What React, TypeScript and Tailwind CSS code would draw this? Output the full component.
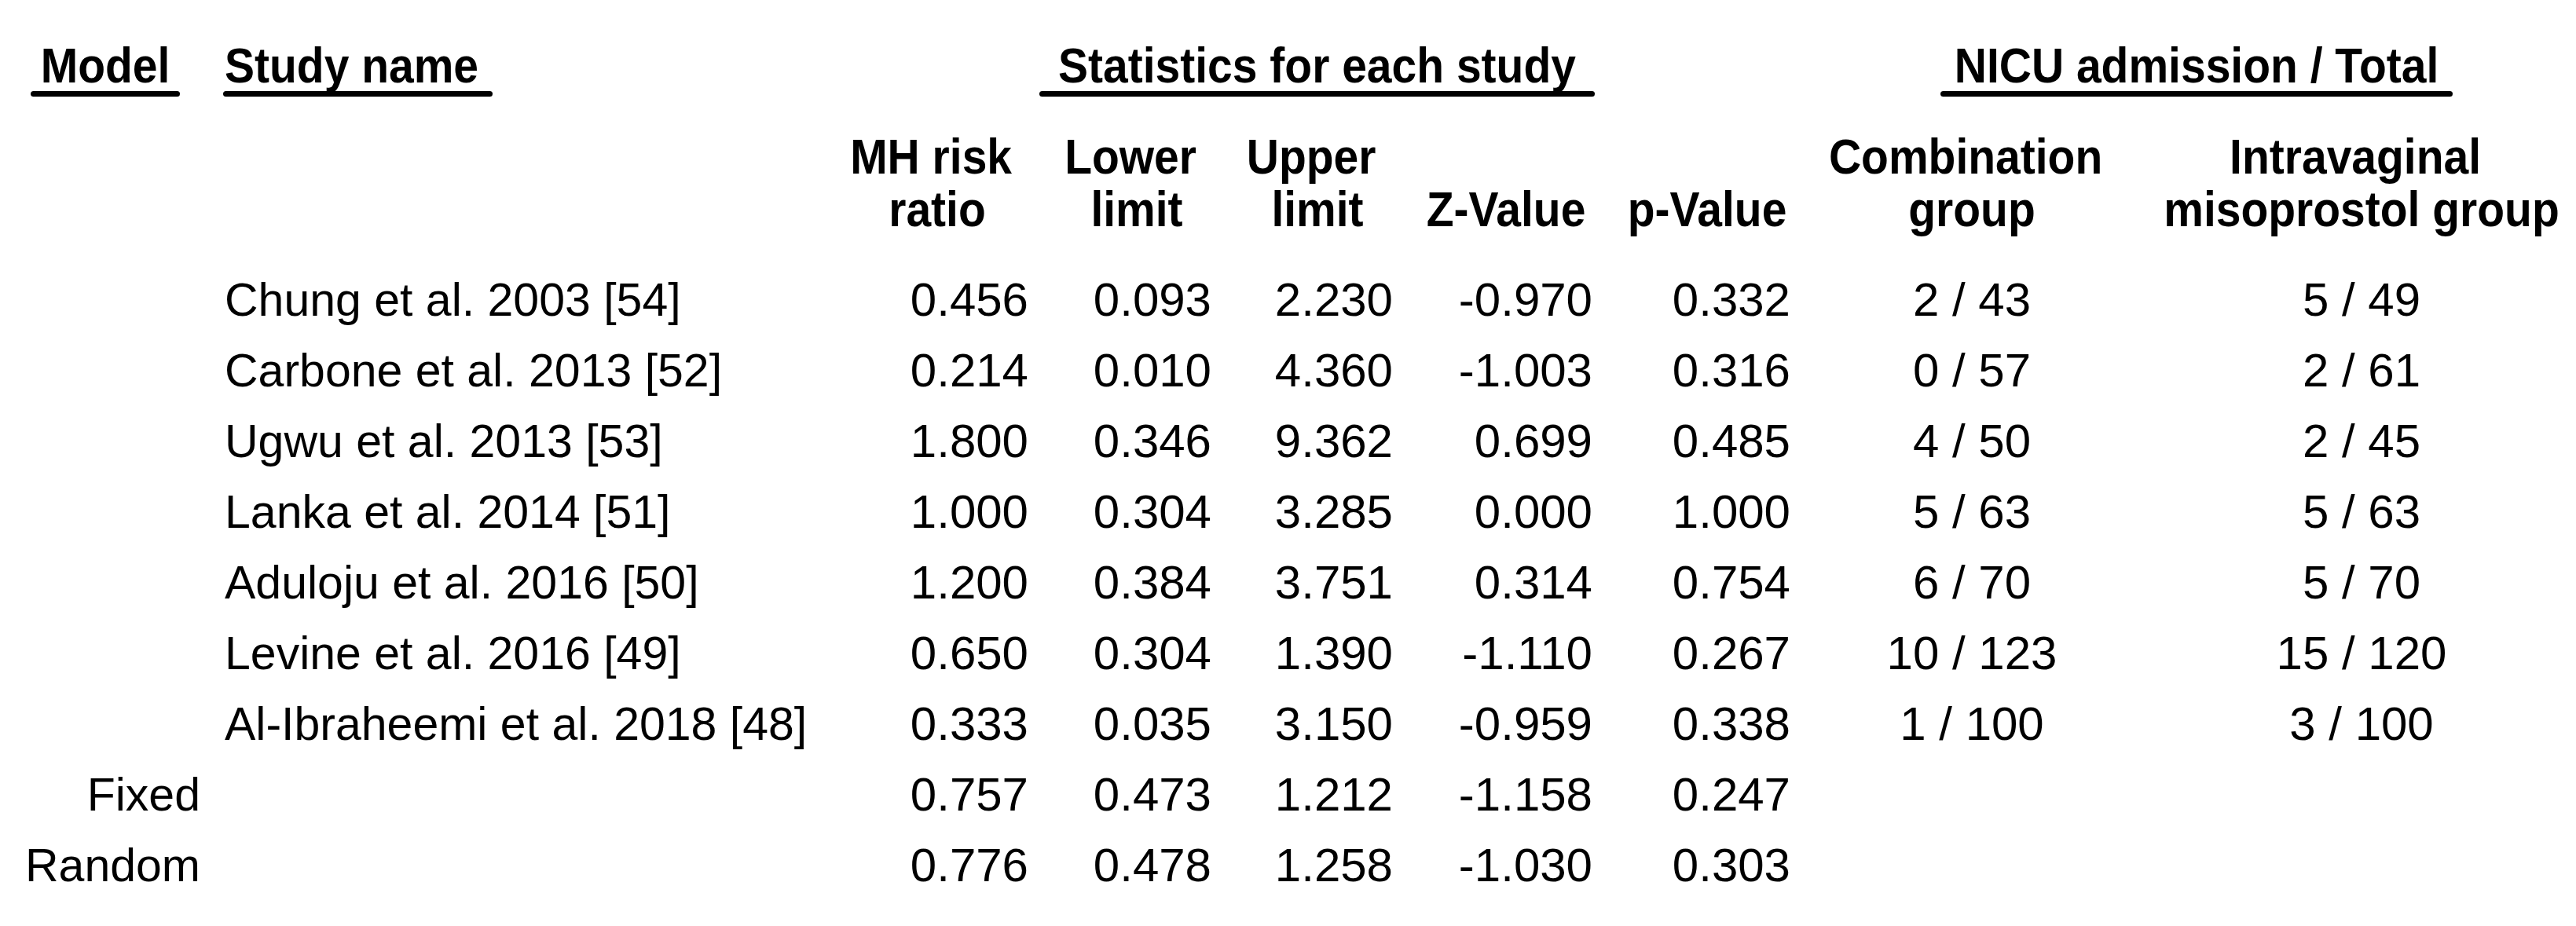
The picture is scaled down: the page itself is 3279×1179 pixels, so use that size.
import React from "react";

const GRID =
  "grid grid-cols-[257px_29px_791px_232px_43px_190px_39px_192px_34px_220px_40px_212px_51px_360px_60px_512px]";

type Row = {
  model?: string;
  study?: string;
  v: [string, string, string, string, string];
  comb?: string;
  intra?: string;
};

const rows: Row[] = [
  { study: "Chung et al. 2003 [54]", v: ["0.456", "0.093", "2.230", "-0.970", "0.332"], comb: "2 / 43", intra: "5 / 49" },
  { study: "Carbone et al. 2013 [52]", v: ["0.214", "0.010", "4.360", "-1.003", "0.316"], comb: "0 / 57", intra: "2 / 61" },
  { study: "Ugwu et al. 2013 [53]", v: ["1.800", "0.346", "9.362", "0.699", "0.485"], comb: "4 / 50", intra: "2 / 45" },
  { study: "Lanka et al. 2014 [51]", v: ["1.000", "0.304", "3.285", "0.000", "1.000"], comb: "5 / 63", intra: "5 / 63" },
  { study: "Aduloju et al. 2016 [50]", v: ["1.200", "0.384", "3.751", "0.314", "0.754"], comb: "6 / 70", intra: "5 / 70" },
  { study: "Levine et al. 2016 [49]", v: ["0.650", "0.304", "1.390", "-1.110", "0.267"], comb: "10 / 123", intra: "15 / 120" },
  { study: "Al-Ibraheemi et al. 2018 [48]", v: ["0.333", "0.035", "3.150", "-0.959", "0.338"], comb: "1 / 100", intra: "3 / 100" },
  { model: "Fixed", v: ["0.757", "0.473", "1.212", "-1.158", "0.247"] },
  { model: "Random", v: ["0.776", "0.478", "1.258", "-1.030", "0.303"] },
];

function TitleHead({ text, align }: { text: string; align: "center" | "left" }) {
  return (
    <div className="flex flex-col">
      <div
        className={
          align === "center"
            ? "text-center leading-none whitespace-nowrap"
            : "text-left pl-[2px] leading-none whitespace-nowrap"
        }
      >
        <span className="inline-block origin-[50%_48px] scale-y-[1.1]">{text}</span>
      </div>
      <div className="mt-[2px] h-[7px] rounded-full bg-black" />
    </div>
  );
}

function SubHead({ lines, col }: { lines: string[]; col: string }) {
  return (
    <div className={`${col} flex flex-col justify-end items-center`}>
      {lines.map((l, i) => (
        <span key={i} className="inline-block whitespace-nowrap origin-[50%_53px] scale-y-[1.1]">
          {l}
        </span>
      ))}
    </div>
  );
}

export default function App() {
  return (
    <div className="w-[3279px] h-[1179px] bg-white text-black font-['Liberation_Sans',Arial,sans-serif] overflow-hidden">
      {/* Title row */}
      <div className="flex pt-[57px] text-[57px] font-bold">
        <div className="ml-[39px] w-[190px]">
          <TitleHead text="Model" align="center" />
        </div>
        <div className="ml-[55px] w-[343px]">
          <TitleHead text="Study name" align="left" />
        </div>
        <div className="ml-[696px] w-[707px]">
          <TitleHead text="Statistics for each study" align="center" />
        </div>
        <div className="ml-[440px] w-[652px]">
          <TitleHead text="NICU admission / Total" align="center" />
        </div>
      </div>

      {/* Column headers */}
      <div className={`${GRID} mt-[45px] h-[134px] text-[57px] font-bold leading-[67px]`}>
        <SubHead col="col-start-4" lines={["MH risk\u00a0", "ratio"]} />
        <SubHead col="col-start-6" lines={["Lower\u00a0", "limit"]} />
        <SubHead col="col-start-8" lines={["Upper\u00a0", "limit"]} />
        <SubHead col="col-start-10" lines={["Z-Value"]} />
        <SubHead col="col-start-12" lines={["p-Value"]} />
        <SubHead col="col-start-14" lines={["Combination\u00a0", "group"]} />
        <SubHead col="col-start-16" lines={["Intravaginal\u00a0", "misoprostol group"]} />
      </div>

      {/* Data rows */}
      <div className="mt-[35px] text-[60px] leading-[90px]">
        {rows.map((r, i) => (
          <div key={i} className={`${GRID} h-[90px]`}>
            <div className="col-start-1 text-right whitespace-nowrap text-[59px] pr-[2px]">{r.model ?? ""}</div>
            <div className="col-start-3 text-left whitespace-nowrap text-[59px]">{r.study ?? ""}</div>
            <div className="col-start-4 text-right whitespace-nowrap">{r.v[0]}</div>
            <div className="col-start-6 text-right whitespace-nowrap">{r.v[1]}</div>
            <div className="col-start-8 text-right whitespace-nowrap">{r.v[2]}</div>
            <div className="col-start-10 text-right whitespace-nowrap">{r.v[3]}</div>
            <div className="col-start-12 text-right whitespace-nowrap">{r.v[4]}</div>
            <div className="col-start-14 text-center whitespace-nowrap">{r.comb ?? ""}</div>
            <div className="col-start-16 text-center whitespace-nowrap">{r.intra ?? ""}</div>
          </div>
        ))}
      </div>
    </div>
  );
}
